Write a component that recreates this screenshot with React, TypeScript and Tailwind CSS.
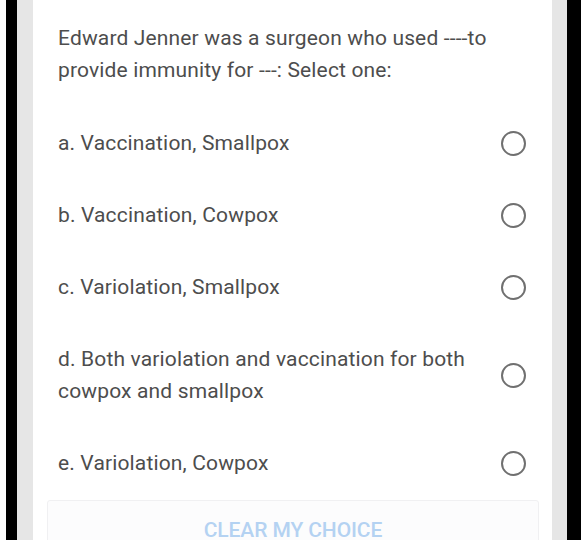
import React from "react";

const options: string[] = [
  "a. Vaccination, Smallpox",
  "b. Vaccination, Cowpox",
  "c. Variolation, Smallpox",
  "d. Both variolation and vaccination for both cowpox and smallpox",
  "e. Variolation, Cowpox",
];

function Radio() {
  return (
    <span className="block w-[25px] h-[25px] shrink-0 rounded-full border-[2.5px] border-[#707070] bg-white" />
  );
}

export default function App() {
  return (
    <div
      className="w-[585px] h-[540px] overflow-hidden bg-white flex"
      style={{ fontFamily: "Roboto, 'Liberation Sans', Arial, sans-serif" }}
    >
      <div className="w-[6px] bg-white" />
      <div className="w-[11px] bg-black" />
      <div className="w-[16px] bg-[#e6e6e6]" />
      <div className="w-[519px] flex flex-col">
        <div className="h-[3px] bg-[#e6e6e6]" />
        <div className="flex-1 bg-white pt-[22px] pl-[25px] pr-[26px]">
          <p className="text-[21px] leading-[32px] tracking-[0.15px] text-[#4d4d4d] pr-[10px]">
            Edward Jenner was a surgeon who used ----to provide immunity for ---: Select one:
          </p>
          <div className="mt-[21px] flex flex-col">
            {options.map((o) => (
              <div key={o} className="flex items-center justify-between py-[20px]">
                <span className="text-[21px] leading-[32px] tracking-[0.15px] text-[#4d4d4d] max-w-[430px]">{o}</span>
                <Radio />
              </div>
            ))}
          </div>
          <div className="mt-[1px] -ml-[11px] -mr-[13px] h-[60px] border border-[#f0f0f2] bg-[#fcfcfd] rounded-[3px] flex justify-center pt-[17px]">
            <span className="text-[21px] leading-[24px] font-medium text-[#b4d2f2] tracking-[-0.1px]">
              CLEAR MY CHOICE
            </span>
          </div>
        </div>
      </div>
      <div className="w-[15px] bg-[#e6e6e6]" />
      <div className="w-[14px] bg-black" />
      <div className="w-[4px] bg-white" />
    </div>
  );
}
